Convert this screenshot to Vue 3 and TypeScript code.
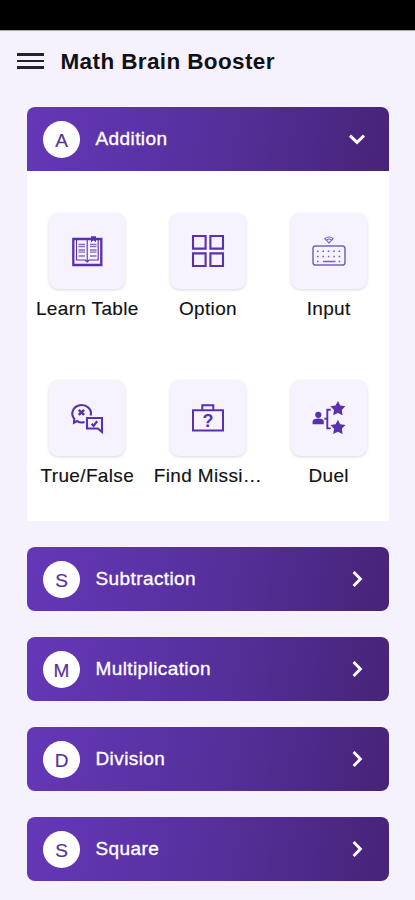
<script setup lang="ts">
import { ref } from 'vue'

interface Activity {
  label: string
  icon: 'book' | 'grid' | 'keyboard' | 'chat' | 'case' | 'duel'
}

const topics: string[] = ['Addition', 'Subtraction', 'Multiplication', 'Division', 'Square']

const activities: Activity[] = [
  { label: 'Learn Table', icon: 'book' },
  { label: 'Option', icon: 'grid' },
  { label: 'Input', icon: 'keyboard' },
  { label: 'True/False', icon: 'chat' },
  { label: 'Find Missi…', icon: 'case' },
  { label: 'Duel', icon: 'duel' },
]

const keyColumns = [8.8, 14.2, 19.6, 25, 30.4]
const open = ref<number>(0)

function toggle(index: number): void {
  open.value = open.value === index ? -1 : index
}
</script>

<template>
  <div class="screen">
    <div class="status"></div>
    <header class="bar">
      <button class="menu" aria-label="Menu"><i></i><i></i><i></i></button>
      <h1 class="title">Math Brain Booster</h1>
    </header>
    <main class="list">
      <section v-for="(topic, index) in topics" :key="topic">
        <button class="head" :class="{ opened: open === index }" @click="toggle(index)">
          <span class="badge">{{ topic[0] }}</span>
          <span class="name">{{ topic }}</span>
          <svg class="chevron" :class="{ down: open === index }" viewBox="0 0 20 20">
            <path d="M6.6 3 L13.4 10 L6.6 17" />
          </svg>
        </button>
        <div v-if="open === index" class="panel">
          <div v-for="item in activities" :key="item.label" class="activity">
            <div class="tile">
              <svg class="icon" viewBox="0 0 40 40">
                <g v-if="item.icon === 'book'">
                  <path d="M6.3 8h28v26h-28z" stroke-width="2.3" />
                  <path d="M9.5 8.5v20.5h8.7l2 2 2-2h9V8.5M20.2 9v21" stroke-width="1.1" />
                  <path d="M11.5 13.5h6.5M11.5 15.6h6.5M11.5 19h6.5M11.5 21.1h6.5M11.5 25h6.5M23 13.5h6.5M23 15.6h6.5M23 19h6.5M23 21.1h6.5M23 25h6.5" stroke-width="1.3" opacity=".7" />
                  <path class="fill" d="M24 5.2h5v6l-2.5-2-2.5 2z" />
                </g>
                <g v-else-if="item.icon === 'grid'" stroke-width="2.1">
                  <path d="M5 5h12.6v12.6H5zM22.4 5H35v12.6H22.4zM5 22.4h12.6V35H5zM22.4 22.4H35V35H22.4z" />
                </g>
                <g v-else-if="item.icon === 'keyboard'" class="light" stroke-width="1.5">
                  <rect x="4" y="15" width="32" height="19" rx="2.6" />
                  <path d="M15.8 7.6q4.2-3.2 8.4 0L20 12zM17.8 8.8q2.2-1.5 4.4 0" stroke-width="1.1" />
                  <path d="M14 30.5h12.5" />
                  <g v-for="x in keyColumns" :key="x">
                    <path :d="`M${x - 0.8} 20.3h1.6M${x - 0.8} 25.5h1.6`" stroke-width="1.6" />
                  </g>
                  <path d="M8 30.5h1.6M29.6 30.5h1.6" stroke-width="1.6" />
                </g>
                <g v-else-if="item.icon === 'chat'" stroke-width="2.1">
                  <path d="M17.5 24.1Q13.5 25.4 10.2 23.1L7 24.8l.3-4A9.3 8.5 0 1 1 23.7 17.5" />
                  <path d="M11.7 11.9l5.4 5M17.1 11.9l-5.4 5" stroke-width="2.5" />
                  <path d="M20 20h15v14l-4.2-3.5H20z" />
                  <path d="M24.6 25.8l2 2 3.6-4.6" stroke-width="2.2" />
                </g>
                <g v-else-if="item.icon === 'case'" stroke-width="2">
                  <path d="M5 12.2h30v20.3H5zM14.3 12V7.2h11V12" />
                  <text x="20" y="28.8" text-anchor="middle">?</text>
                </g>
                <g v-else>
                  <circle class="fill" cx="9.3" cy="16.8" r="3.1" />
                  <path class="fill" d="M3.6 26.2v-2.8q.4-2.8 5.7-2.8t5.5 2.8v2.8z" />
                  <path d="M15.4 20.7H18M21.7 11.8h-3.4v18.6h3.4" stroke-width="1.9" />
                  <path class="fill" d="M28.9 3l2.3 4.4 5.2.8-3.6 3.7.8 5.3-4.7-2.3-4.7 2.3.8-5.3-3.6-3.7 5.2-.8zM28.9 21.8l2.3 4.4 5.2.8-3.6 3.7.8 5.3-4.7-2.3-4.7 2.3.8-5.3-3.6-3.7 5.2-.8z" />
                </g>
              </svg>
            </div>
            <span class="label">{{ item.label }}</span>
          </div>
        </div>
      </section>
    </main>
  </div>
</template>

<style>
body {
  margin: 0;
  background: #f5f1fd;
}
</style>

<style scoped>
.screen {
  height: 900px;
  overflow: hidden;
  background: #f5f1fd;
  font-family: "Liberation Sans", Arial, sans-serif;
}

.status {
  height: 30px;
  background: #000;
  border-bottom: 1px solid #aaa6ae;
}

.bar {
  display: flex;
  align-items: center;
  height: 60px;
  padding-left: 17px;
}

button {
  border: 0;
  font: inherit;
  text-align: left;
}

.menu {
  display: flex;
  flex-direction: column;
  gap: 4.2px;
  width: 27px;
  padding: 0;
  background: none;
}

.menu i {
  height: 2.4px;
  background: #252229;
}

.title {
  margin: 1px 0 0 16.5px;
  font-size: 22.5px;
  line-height: 30px;
  letter-spacing: 0.38px;
  color: #111014;
}

.list {
  display: flex;
  flex-direction: column;
  gap: 26.5px;
  padding: 16.3px 26px 0 27px;
}

.head {
  display: flex;
  align-items: center;
  box-sizing: border-box;
  width: 100%;
  height: 63.5px;
  padding: 0 22px 0 16px;
  border-radius: 8px;
  background: linear-gradient(100deg, #6537b8 0%, #55309b 52%, #472378 100%);
  color: #fff;
}

.head.opened {
  border-radius: 8px 8px 0 0;
}

.badge {
  width: 37px;
  height: 37px;
  border-radius: 50%;
  background: #fff;
  color: #55339b;
  font-size: 19px;
  line-height: 39px;
  text-align: center;
  -webkit-text-stroke: 0.2px #55339b;
}

.name {
  flex: 1;
  margin-left: 15.5px;
  font-size: 19px;
  letter-spacing: 0.4px;
  -webkit-text-stroke: 0.35px #fff;
}

.chevron {
  width: 20px;
  height: 20px;
  fill: none;
  stroke: #fff;
  stroke-width: 2.9;
}

.chevron.down {
  transform: rotate(90deg);
}

.panel {
  display: grid;
  grid-template-columns: repeat(3, minmax(0, 1fr));
  grid-auto-rows: 166.5px;
  box-sizing: border-box;
  height: 350px;
  padding-top: 42.5px;
  background: #fff;
}

.activity {
  display: flex;
  flex-direction: column;
  align-items: center;
}

.tile {
  display: flex;
  align-items: center;
  justify-content: center;
  width: 76px;
  height: 76px;
  border-radius: 9px;
  background: #f6f2fe;
  box-shadow: 0 1px 3px rgba(70, 60, 90, 0.2);
}

.icon {
  width: 40px;
  height: 40px;
  fill: none;
  stroke: #5930ad;
}

.icon .fill {
  fill: #5930ad;
  stroke: none;
}

.icon .light {
  stroke: #7b61bb;
}

.icon text {
  fill: #5930ad;
  stroke: none;
  font-size: 18px;
  font-weight: bold;
}

.label {
  margin-top: 8px;
  font-size: 19px;
  line-height: 24px;
  letter-spacing: 0.35px;
  white-space: nowrap;
  color: #111;
  -webkit-text-stroke: 0.15px #111;
}
</style>
